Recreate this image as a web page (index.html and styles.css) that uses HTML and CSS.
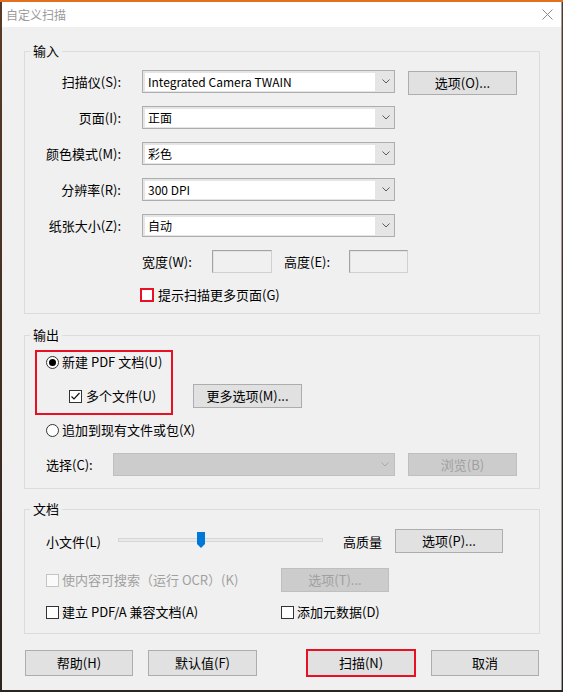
FILE: index.html
```html
<!DOCTYPE html>
<html lang="zh-CN">
<head>
  <meta charset="UTF-8" />
  <title>自定义扫描</title>
  <link rel="stylesheet" href="styles.css">
</head>
<body>
  <div class="window">
    <div class="titlebar">
      <span class="title">自定义扫描</span>
      <svg class="close" width="11" height="11" viewBox="0 0 11 11"><path d="M0.5 0.5L10.5 10.5M10.5 0.5L0.5 10.5" stroke="#8a8a8a" stroke-width="1" fill="none"/></svg>
    </div>

    <div class="content">
      <fieldset class="group group-input">
        <legend>输入</legend>
        <div class="field-row">
          <span class="field-label">扫描仪(S):</span>
          <div class="combo"><span class="combo-text">Integrated Camera TWAIN</span><span class="combo-arrow"><svg width="8" height="5" viewBox="0 0 8 5"><path d="M0.5 0.5L4 4L7.5 0.5" stroke="#5a5a5a" fill="none"/></svg></span></div>
          <button class="btn btn-side">选项(O)...</button>
        </div>
        <div class="field-row">
          <span class="field-label">页面(I):</span>
          <div class="combo"><span class="combo-text">正面</span><span class="combo-arrow"><svg width="8" height="5" viewBox="0 0 8 5"><path d="M0.5 0.5L4 4L7.5 0.5" stroke="#5a5a5a" fill="none"/></svg></span></div>
        </div>
        <div class="field-row">
          <span class="field-label">颜色模式(M):</span>
          <div class="combo"><span class="combo-text">彩色</span><span class="combo-arrow"><svg width="8" height="5" viewBox="0 0 8 5"><path d="M0.5 0.5L4 4L7.5 0.5" stroke="#5a5a5a" fill="none"/></svg></span></div>
        </div>
        <div class="field-row">
          <span class="field-label">分辨率(R):</span>
          <div class="combo"><span class="combo-text">300 DPI</span><span class="combo-arrow"><svg width="8" height="5" viewBox="0 0 8 5"><path d="M0.5 0.5L4 4L7.5 0.5" stroke="#5a5a5a" fill="none"/></svg></span></div>
        </div>
        <div class="field-row">
          <span class="field-label">纸张大小(Z):</span>
          <div class="combo"><span class="combo-text">自动</span><span class="combo-arrow"><svg width="8" height="5" viewBox="0 0 8 5"><path d="M0.5 0.5L4 4L7.5 0.5" stroke="#5a5a5a" fill="none"/></svg></span></div>
        </div>
        <div class="size-row">
          <span class="size-label">宽度(W):</span>
          <span class="edit"></span>
          <span class="size-label second">高度(E):</span>
          <span class="edit narrow"></span>
        </div>
        <div class="check-row prompt-row">
          <span class="check highlight"></span>
          <span>提示扫描更多页面(G)</span>
        </div>
      </fieldset>

      <fieldset class="group group-output">
        <legend>输出</legend>
        <div class="new-doc">
          <div class="red-box">
            <div class="check-row">
              <span class="radio on"><span class="dot"></span></span>
              <span>新建 PDF 文档(U)</span>
            </div>
            <div class="check-row multi-row">
              <span class="check"><svg width="11" height="11" viewBox="0 0 11 11"><path d="M1.5 5.5L4 8L9.5 2" stroke="#111" stroke-width="1.2" fill="none"/></svg></span>
              <span>多个文件(U)</span>
            </div>
          </div>
          <button class="btn more-btn">更多选项(M)...</button>
        </div>
        <div class="check-row append-row">
          <span class="radio"></span>
          <span>追加到现有文件或包(X)</span>
        </div>
        <div class="select-row">
          <span class="select-label">选择(C):</span>
          <div class="combo disabled"><span class="combo-arrow"><svg width="8" height="5" viewBox="0 0 8 5"><path d="M0.5 0.5L4 4L7.5 0.5" stroke="#a8a8a8" fill="none"/></svg></span></div>
          <button class="btn btn-disabled browse-btn">浏览(B)</button>
        </div>
      </fieldset>

      <fieldset class="group group-doc">
        <legend>文档</legend>
        <div class="slider-row">
          <span class="slider-label">小文件(L)</span>
          <div class="track">
            <svg class="thumb" width="9" height="17" viewBox="0 0 9 17"><polygon points="0,0 8,0 8,12 4,16 0,12" fill="#0078d7"/></svg>
          </div>
          <span class="hq-label">高质量</span>
          <button class="btn">选项(P)...</button>
        </div>
        <div class="ocr-row">
          <div class="check-row col disabled-text">
            <span class="check disabled"></span>
            <span>使内容可搜索（运行 OCR）(K)</span>
          </div>
          <button class="btn btn-disabled">选项(T)...</button>
        </div>
        <div class="pdfa-row">
          <div class="check-row col">
            <span class="check"></span>
            <span>建立 PDF/A 兼容文档(A)</span>
          </div>
          <div class="check-row">
            <span class="check"></span>
            <span>添加元数据(D)</span>
          </div>
        </div>
      </fieldset>

      <div class="footer">
        <button class="btn foot-btn">帮助(H)</button>
        <button class="btn foot-btn default-btn">默认值(F)</button>
        <button class="btn foot-btn scan-btn">扫描(N)</button>
        <button class="btn foot-btn cancel-btn">取消</button>
      </div>
    </div>
  </div>
</body>
</html>
```

FILE: styles.css
```css
html, body {
  margin: 0;
  height: 692px;
  overflow: hidden;
}

body {
  background: linear-gradient(180deg, #e2701c 0, #e2701c 2px, #5a3a26 2px, #2c2420 100%);
  font-family: "Noto Sans CJK SC", "Noto Sans", sans-serif;
  font-size: 13px;
  color: #000;
}

.window {
  margin: 2px 0 0 2px;
  width: 559px;
  height: 688px;
  background: #f0f0f0;
  border-right: 1px solid #9c9c9c;
}

.titlebar {
  height: 25px;
  background: #fff;
  display: flex;
  align-items: center;
  justify-content: space-between;
  padding: 0 8px 0 4px;
}

.title {
  font-size: 12px;
  color: #9a9a9a;
  line-height: 25px;
}

.content {
  padding: 16px 0 0 22px;
}

.group {
  margin: 0;
  padding: 0 0 10px 0;
  width: 516px;
  box-sizing: border-box;
  border: 1px solid #dcdcdc;
  min-inline-size: 0;
}

.group legend {
  margin-left: 5px;
  padding: 0 3px;
  line-height: 16px;
}

.group-input {
  padding-top: 11px;
}

.group-output {
  margin-top: 13px;
  padding-bottom: 12px;
}

.group-doc {
  margin-top: 12px;
  padding-bottom: 13px;
}

/* rows of the input group */
.field-row {
  display: flex;
  align-items: flex-start;
  height: 23px;
  margin-bottom: 13px;
}

.field-label {
  width: 96px;
  margin-right: 21px;
  text-align: right;
  line-height: 23px;
  white-space: nowrap;
}

.combo {
  width: 253px;
  height: 23px;
  box-sizing: border-box;
  border: 1px solid #adadad;
  background: #e5e5e5;
  display: flex;
}

.combo-text {
  width: 230px;
  margin: 2px 0 1px 2px;
  padding-left: 3px;
  box-sizing: border-box;
  background: #fff;
  font-size: 12px;
  line-height: 18px;
  white-space: nowrap;
  overflow: hidden;
}

.combo-arrow {
  flex: 1;
  display: flex;
  align-items: center;
  justify-content: center;
  padding-left: 3px;
}

.combo.disabled {
  width: 282px;
  background: #cccccc;
  border-color: #bfbfbf;
  justify-content: flex-end;
}

.combo.disabled .combo-arrow {
  flex: none;
  width: 19px;
  padding-left: 0;
}

.btn {
  font-family: inherit;
  font-size: 13px;
  color: #000;
  width: 108px;
  height: 24px;
  margin: 0;
  padding: 0;
  box-sizing: border-box;
  background: #e1e1e1;
  border: 1px solid #adadad;
  border-radius: 0;
  line-height: 20px;
}

.btn-side {
  width: 109px;
  margin-left: 13px;
  margin-top: 1px;
}

.btn-disabled {
  background: #cccccc;
  border-color: #bfbfbf;
  color: #a0a0a0;
}

.size-row {
  display: flex;
  height: 23px;
  margin-left: 117px;
  line-height: 23px;
}

.size-label {
  width: 70px;
  white-space: nowrap;
}

.size-label.second {
  margin-left: 12px;
  width: 65px;
}

.edit {
  width: 60px;
  height: 23px;
  box-sizing: border-box;
  border: 1px solid #a3a3a3;
  border-right-color: #d0d0d0;
  border-bottom-color: #d0d0d0;
  background: #f0f0f0;
  box-shadow: inset 1px 1px 0 #e3e3e3;
}

.edit.narrow {
  width: 59px;
}

/* checkboxes and radios */
.check-row {
  display: flex;
  align-items: center;
  height: 16px;
  line-height: 16px;
  white-space: nowrap;
}

.check {
  width: 13px;
  height: 13px;
  box-sizing: border-box;
  border: 1px solid #333;
  background: #fff;
  margin-right: 3px;
  display: flex;
  align-items: center;
  justify-content: center;
}

.check.highlight {
  width: 14px;
  height: 14px;
  border: 2px solid #e81123;
  margin-right: 4px;
}

.check.disabled {
  border-color: #c4c4c4;
  background: #fafafa;
}

.radio {
  width: 13px;
  height: 13px;
  box-sizing: border-box;
  border: 1px solid #333;
  border-radius: 50%;
  background: #fff;
  margin-right: 3px;
  display: flex;
  align-items: center;
  justify-content: center;
}

.radio .dot {
  width: 7px;
  height: 7px;
  border-radius: 50%;
  background: #000;
}

.prompt-row {
  margin-top: 14px;
  margin-left: 115px;
}

/* output group */
.new-doc {
  display: flex;
  align-items: flex-end;
  margin-top: 7px;
}

.red-box {
  margin-left: 10px;
  width: 138px;
  height: 65px;
  box-sizing: border-box;
  border: 2px solid #e81123;
  padding: 2px 0 0 9px;
}

.multi-row {
  margin-top: 18px;
  margin-left: 23px;
}

.multi-row .check {
  margin-right: 4px;
}

.more-btn {
  width: 109px;
  margin-left: 20px;
  margin-bottom: 7px;
}

.append-row {
  margin-top: 7px;
  margin-left: 21px;
}

.select-row {
  display: flex;
  height: 23px;
  margin-top: 15px;
  margin-left: 21px;
  line-height: 23px;
}

.select-label {
  width: 67px;
}

.browse-btn {
  width: 109px;
  height: 23px;
  margin-left: 13px;
}

/* document group */
.slider-row {
  display: flex;
  align-items: center;
  height: 24px;
  margin-top: 12px;
  margin-left: 21px;
}

.slider-label {
  width: 72px;
  white-space: nowrap;
}

.track {
  position: relative;
  width: 205px;
  height: 4px;
  box-sizing: border-box;
  background: #e7eaea;
  border: 1px solid #d6d6d6;
  margin-bottom: 3px;
}

.thumb {
  position: absolute;
  left: 78px;
  top: -7px;
}

.hq-label {
  width: 52px;
  margin-left: 20px;
  white-space: nowrap;
}

.ocr-row {
  display: flex;
  align-items: center;
  height: 24px;
  margin-top: 15px;
  margin-left: 21px;
}

.col {
  width: 235px;
}

.disabled-text {
  color: #a0a0a0;
}

.pdfa-row {
  display: flex;
  align-items: center;
  height: 16px;
  margin-top: 12px;
  margin-left: 21px;
}

/* dialog buttons */
.footer {
  display: flex;
  margin-top: 16px;
  margin-left: 1px;
}

.foot-btn {
  height: 26px;
  line-height: 22px;
}

.default-btn {
  margin-left: 15px;
  width: 109px;
}

.scan-btn {
  margin-left: 50px;
  border-color: #e81123;
  box-shadow: 0 0 0 1px #e81123;
}

.cancel-btn {
  margin-left: 16px;
}
```
